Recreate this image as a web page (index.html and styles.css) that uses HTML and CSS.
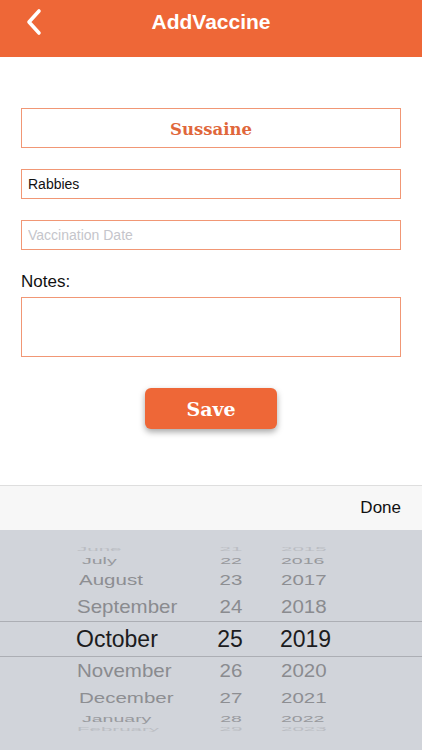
FILE: index.html
```html
<!DOCTYPE html>
<html lang="en">
<head>
<meta charset="UTF-8">
<meta name="viewport" content="width=device-width, initial-scale=1.0">
<title>AddVaccine</title>
<link rel="stylesheet" href="styles.css">
</head>
<body>
<!-- Top bar -->
<div class="nav-bar">
  <a class="back" href="#">
    <svg width="20" height="30" viewBox="0 0 20 30"><polyline points="14,4 4,15 14,26" fill="none" stroke="#fff" stroke-width="3.6" stroke-linecap="round" stroke-linejoin="round"/></svg>
  </a>
  <h1>AddVaccine</h1>
</div>

<div class="form">
  <div class="pet-name">Sussaine</div>
  <input type="text" class="field" value="Rabbies">
  <input type="text" class="field date-field" placeholder="Vaccination Date">
  <div class="notes-label">Notes:</div>
  <textarea class="notes"></textarea>
  <div class="save-row"><button class="save-btn">Save</button></div>
</div>

<!-- Datumväljare -->
<div class="toolbar"><span class="done">Done</span></div>
<div class="picker">
  <div class="picker-row far2"><span class="month">June</span><span class="day">21</span><span class="year">2015</span></div>
  <div class="picker-row far"><span class="month">July</span><span class="day">22</span><span class="year">2016</span></div>
  <div class="picker-row mid"><span class="month">August</span><span class="day">23</span><span class="year">2017</span></div>
  <div class="picker-row near"><span class="month">September</span><span class="day">24</span><span class="year">2018</span></div>
  <div class="picker-row selected"><span class="month">October</span><span class="day">25</span><span class="year">2019</span></div>
  <div class="picker-row near"><span class="month">November</span><span class="day">26</span><span class="year">2020</span></div>
  <div class="picker-row mid"><span class="month">December</span><span class="day">27</span><span class="year">2021</span></div>
  <div class="picker-row far"><span class="month">January</span><span class="day">28</span><span class="year">2022</span></div>
  <div class="picker-row far2"><span class="month">February</span><span class="day">29</span><span class="year">2023</span></div>
</div>
</body>
</html>
```

FILE: styles.css
```css
body {
  margin: 0;
  font-family: "Liberation Sans", Arial, sans-serif;
  background-color: #ffffff;
  color: #000000;
  width: 422px;
  height: 750px;
  overflow: hidden;
}
.nav-bar {
  background-color: #ee6737;
  height: 44px;
  padding-bottom: 13px;
  display: flex;
  align-items: center;
  justify-content: center;
  position: relative;
}
.back {
  position: absolute;
  left: 25px;
  top: 7px;
  display: block;
  line-height: 0;
}
h1 {
  margin: 0;
  color: #ffffff;
  font-size: 21px;
  font-weight: bold;
}
.form {
  padding: 51px 21px 0;
  display: flex;
  flex-direction: column;
}
.pet-name {
  height: 40px;
  border: 1px solid #f19775;
  box-sizing: border-box;
  display: flex;
  align-items: center;
  justify-content: center;
  font-family: "DejaVu Serif", "Liberation Serif", serif;
  font-weight: bold;
  font-size: 16.5px;
  color: #e0673b;
  padding-top: 2px;
}
.field {
  height: 30px;
  border: 1px solid #f19775;
  box-sizing: border-box;
  margin: 21px 0 0;
  padding: 0 6px;
  font-family: "Liberation Sans", Arial, sans-serif;
  font-size: 14px;
  color: #111111;
  outline: none;
}
.date-field { margin-top: 21px; }
.date-field::placeholder { color: #c5c5cb; }
.notes-label {
  margin-top: 22px;
  font-size: 17px;
  line-height: 20px;
  color: #111111;
}
.notes {
  margin: 5px 0 0;
  height: 60px;
  border: 1px solid #f19775;
  box-sizing: border-box;
  resize: none;
  outline: none;
}
.save-row {
  display: flex;
  justify-content: center;
  margin-top: 31px;
}
.save-btn {
  width: 132px;
  height: 41px;
  background-color: #ee6737;
  border: none;
  border-radius: 6px;
  box-shadow: 0 3px 6px rgba(0, 0, 0, 0.35);
  color: #ffffff;
  font-family: "DejaVu Serif", "Liberation Serif", serif;
  font-weight: bold;
  font-size: 19px;
  padding: 0;
}
.toolbar {
  margin-top: 56px;
  height: 44px;
  background-color: #f7f7f7;
  border-top: 1px solid #dedede;
  display: flex;
  align-items: center;
  justify-content: flex-end;
  padding-right: 21px;
}
.done {
  font-size: 17px;
  color: #111111;
}
.picker {
  height: 221px;
  background-color: #d1d4da;
  padding-top: 15px;
  box-sizing: border-box;
}
.picker-row {
  display: flex;
  align-items: center;
  font-size: 20.5px;
  color: #8a8b8f;
  overflow: hidden;
}
.picker-row span { display: block; }
.month { width: 130px; padding-left: 77px; }
.day { width: 48px; text-align: center; }
.year { padding-left: 26px; }
.far2 { height: 8px; }
.far2 span { transform: scaleY(0.25); opacity: 0.3; }
.far { height: 14px; }
.far span { transform: scaleY(0.5); opacity: 0.8; font-size: 19.5px; }
.far .month { padding-left: 82px; width: 125px; }
.mid { height: 26px; }
.mid span { transform: scaleY(0.72); opacity: 0.95; }
.mid .month { padding-left: 79px; width: 128px; }
.near { height: 28px; }
.near span { transform: scaleY(0.88); }
.selected {
  height: 34px;
  border-top: 1px solid #acaeb4;
  border-bottom: 1px solid #acaeb4;
  font-size: 23px;
  color: #1c1c1e;
}
.selected .month { padding-left: 76px; }
```
